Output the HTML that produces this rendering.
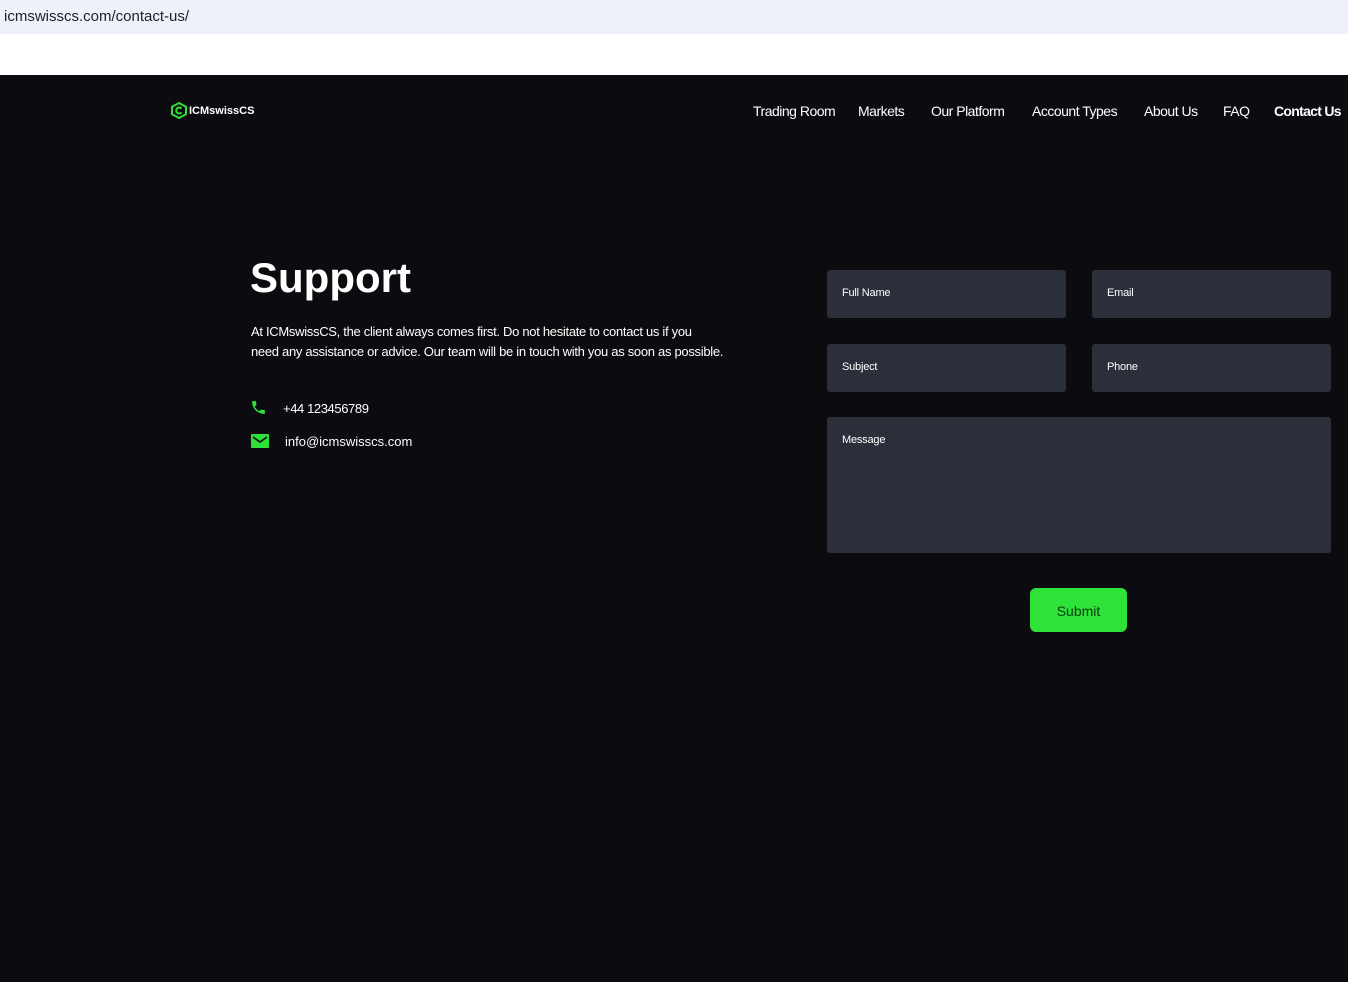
<!DOCTYPE html>
<html><head><style>
*{margin:0;padding:0;box-sizing:border-box}
body{width:1348px;height:982px;background:#0b0b10;font-family:"Liberation Sans",sans-serif;color:#fff;position:relative;overflow:hidden}
.url{position:absolute;left:0;top:0;width:1348px;height:34px;background:#eef1f9;color:#222;font-size:15px;padding:8px 4px}
.white{position:absolute;top:34px;left:0;width:1348px;height:41px;background:#fff}
.nav a{position:absolute;top:103px;font-size:14px;color:#fff;letter-spacing:-0.5px}
.f{position:absolute;background:#2b2f3a;border-radius:3px;font-size:11px;padding:17px 15px;letter-spacing:-0.2px}
</style></head><body>
<div class="url">icmswisscs.com/contact-us/</div>
<div class="white"></div>
<svg style="position:absolute;left:171px;top:102px" width="16" height="17" viewBox="0 0 16 17"><polygon points="8,1 15,4.8 15,12.2 8,16 1,12.2 1,4.8" fill="none" stroke="#2fe23a" stroke-width="2"/><path d="M10.5 6.5 A3 3 0 1 0 10.5 10.5" fill="none" stroke="#2fe23a" stroke-width="2"/></svg>
<div style="position:absolute;left:189px;top:105px;font-size:11px;font-weight:bold">ICMswissCS</div>
<div class="nav">
<a style="left:753px">Trading Room</a><a style="left:858px">Markets</a><a style="left:931px">Our Platform</a><a style="left:1032px">Account Types</a><a style="left:1144px">About Us</a><a style="left:1223px">FAQ</a><a style="left:1274px;font-weight:bold;letter-spacing:-0.7px">Contact Us</a>
</div>
<div style="position:absolute;left:250px;top:254px;font-size:42px;font-weight:bold;letter-spacing:0px">Support</div>
<div style="position:absolute;left:251px;top:322px;white-space:nowrap;font-size:13px;line-height:20px;letter-spacing:-0.3px">At ICMswissCS, the client always comes first. Do not hesitate to contact us if you<br>need any assistance or advice. Our team will be in touch with you as soon as possible.</div>
<svg style="position:absolute;left:250px;top:399px" width="17" height="17" viewBox="0 0 24 24"><path fill="#2fe23a" d="M6.6 10.8c1.4 2.8 3.8 5.1 6.6 6.6l2.2-2.2c.3-.3.7-.4 1-.2 1.1.4 2.3.6 3.6.6.6 0 1 .4 1 1V20c0 .6-.4 1-1 1C10.6 21 3 13.4 3 4c0-.6.4-1 1-1h3.5c.6 0 1 .4 1 1 0 1.3.2 2.5.6 3.6.1.3 0 .7-.2 1z"/></svg>
<div style="position:absolute;left:283px;top:401px;font-size:13px;letter-spacing:-0.4px">+44 123456789</div>
<svg style="position:absolute;left:251px;top:434px" width="18" height="14" viewBox="0 0 18 14"><rect width="18" height="14" rx="1" fill="#2fe23a"/><path d="M2 3 L9 8 L16 3" fill="none" stroke="#0b0b10" stroke-width="1.6"/></svg>
<div style="position:absolute;left:285px;top:434px;font-size:13px">info@icmswisscs.com</div>
<div class="f" style="left:827px;top:270px;width:239px;height:48px">Full Name</div>
<div class="f" style="left:1092px;top:270px;width:239px;height:48px">Email</div>
<div class="f" style="left:827px;top:344px;width:239px;height:48px">Subject</div>
<div class="f" style="left:1092px;top:344px;width:239px;height:48px">Phone</div>
<div class="f" style="left:827px;top:417px;width:504px;height:136px">Message</div>
<div style="position:absolute;left:1030px;top:588px;width:97px;height:44px;background:#2fe23a;border-radius:6px;color:#0b3a10;font-size:14px;text-align:center;line-height:46px">Submit</div>
</body></html>
